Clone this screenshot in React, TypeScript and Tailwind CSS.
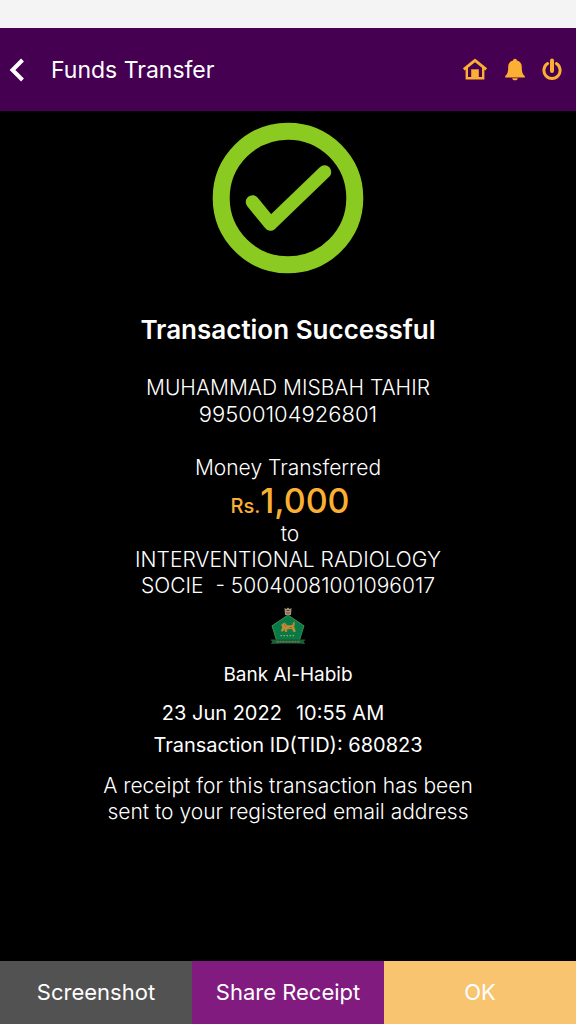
const transfer = {
  senderName: 'MUHAMMAD MISBAH TAHIR',
  senderAccount: '99500104926801',
  currency: 'Rs.',
  amount: '1,000',
  recipientName: 'INTERVENTIONAL RADIOLOGY SOCIE',
  recipientAccount: '50040081001096017',
  bank: 'Bank Al-Habib',
  date: '23 Jun 2022',
  time: '10:55 AM',
  tid: '680823',
};

const HomeIcon = () => (
  <svg viewBox="0 0 26 24" className="w-[26px] h-6" fill="none" stroke="#fbb034" aria-hidden="true">
    <path d="M1.8 11.300 13 2.300l11.200 9" strokeWidth="2.800" strokeLinejoin="round" />
    <path d="M4.800 9.500v10.700h16.400V9.500" strokeWidth="2.400" />
    <path d="M9.200 11.300h7.600V20H9.200z" fill="#fbb034" stroke="none" />
  </svg>
);

const BellIcon = () => (
  <svg viewBox="0 0 20 24" className="w-5 h-6" fill="#fbb034" aria-hidden="true">
    <path d="M10 .8c-1.100 0-1.900.8-1.900 1.800C5 3.300 3.200 5.600 3.200 9c0 4.600-.6 7-3 9v1.500h19.600V18c-2.400-2-3-4.400-3-9 0-3.400-1.800-5.700-4.900-6.400 0-1-.8-1.800-1.900-1.800z" />
    <path d="M7.200 20.200h5.600c0 1.200-1.200 2.100-2.800 2.100s-2.800-.9-2.800-2.100z" />
  </svg>
);

const PowerIcon = () => (
  <svg viewBox="0 0 20 24" className="w-5 h-6" fill="none" stroke="#fbb034" aria-hidden="true">
    <path d="M5.600 5.600a8.100 8.100 0 1 0 8.800 0" strokeWidth="3" strokeLinecap="round" />
    <path d="M10 2.600v10.400" strokeWidth="4" strokeLinecap="round" />
  </svg>
);

const SuccessMark = () => (
  <svg viewBox="0 0 152 152" className="w-[152px] h-[152px]" fill="none" stroke="#8bca20" aria-hidden="true">
    <circle cx="76" cy="76" r="66.800" strokeWidth="17" />
    <path d="M40.500 80 58.500 102 112.500 50" strokeWidth="13.500" strokeLinecap="round" strokeLinejoin="round" />
  </svg>
);

const BankEmblem = () => (
  <svg viewBox="0 0 36 38" className="w-9 h-[38px]" aria-hidden="true">
    <path d="M14.500 1l1.800 1L18 .5 19.700 2l1.800-1-.5 7h-6z" fill="#a9947c" />
    <path d="M16.500 3.500h3M16.300 6h3.400" stroke="#5c4630" strokeWidth="1" />
    <path d="M18 8 34 18.800 29.200 34H6.800L2 18.800z" fill="#087a48" stroke="#3f8c4c" strokeWidth="1" />
    <path
      d="M12 17.500c1.500-2 4-1.500 4.300.8 2 .9 4.500.6 6.200-.1 1-.7.400-2.500 1.600-3.300-.1 1.500.6 3-.4 4.300.3 1.700 1.300 2.800 1.500 5.300h-1.700l-1.300-3.200c-1.800.7-3.700.6-5.200.2l-.3 3h-1.600l-.3-3.400-2 3h-1.500l1.600-4.200c-1-.5-1.400-1.300-.9-2.400z"
      fill="#c48d34"
      stroke="#c48d34"
      strokeWidth=".8"
    />
    <path d="M14 17.400l2 2.600M19.500 20.500h2.500" stroke="#d4492a" strokeWidth="1" />
    <path d="M10.500 28.600h15" stroke="#b5a24a" strokeWidth="1.400" strokeDasharray="1.500 1.500" />
    <path d="M.5 32.800c6-.6 29-.6 35 0l-1.800 2 1.500 2.200c-6-.7-28.400-.7-34.400 0l1.500-2.200z" fill="#17613a" />
    <path d="M6.500 34.800h23" stroke="#8a8447" strokeWidth="1.200" strokeDasharray="2 1" />
  </svg>
);

const App = () => {
  return (
    <div className="min-h-screen flex flex-col bg-black text-white font-['Inter',sans-serif]">
      {/* Status bar strip */}
      <div className="h-7 bg-[#f4f4f4]" />

      <header className="h-[83px] flex items-center pl-2 pr-[14px] bg-[#450052]">
        <button type="button" aria-label="Back" className="w-[43px] h-10 flex items-center">
          <svg viewBox="0 0 18 24" className="w-[18px] h-6" fill="none" stroke="white" strokeWidth="4" aria-hidden="true">
            <path d="M14.500 2 4.500 12l10 10" />
          </svg>
        </button>
        <h1 className="flex-1 text-[23px] leading-8">Funds Transfer</h1>
        <nav className="flex items-center gap-[17px]">
          <button type="button" aria-label="Home">
            <HomeIcon />
          </button>
          <button type="button" aria-label="Notifications">
            <BellIcon />
          </button>
          <button type="button" aria-label="Log out">
            <PowerIcon />
          </button>
        </nav>
      </header>

      <main className="flex-1 flex flex-col items-center pt-[11px] text-center">
        <SuccessMark />

        <h2 className="mt-10 text-[26px] leading-8 font-semibold">Transaction Successful</h2>

        {/* Sender */}
        <div className="mt-[29px] text-[21px] leading-[26px] font-light">
          <p>{transfer.senderName}</p>
          <p className="text-[22px] leading-[26px]">{transfer.senderAccount}</p>
        </div>

        {/* Amount and recipient */}
        <div className="mt-7 w-[330px] text-[21px] leading-[26px] font-light">
          <p>Money Transferred</p>
          <p className="pl-1 text-[34px] leading-10 font-medium text-[#fbb034]">
            <span className="text-[20px] leading-none">{transfer.currency}</span>
            {transfer.amount}
          </p>
          <p className="pl-1">to</p>
          <p className="whitespace-pre-wrap">{`${transfer.recipientName}  - ${transfer.recipientAccount}`}</p>
        </div>

        {/* Bank and reference */}
        <div className="mt-2">
          <BankEmblem />
        </div>
        <p className="mt-[14px] text-[19px] leading-8">{transfer.bank}</p>
        <p className="mt-[6px] pr-[30px] flex gap-[14px] text-[20px] leading-8">
          <span>{transfer.date}</span>
          <span>{transfer.time}</span>
        </p>
        <p className="text-[20px] leading-8">Transaction ID(TID): {transfer.tid}</p>

        <p className="mt-3 mb-8 w-[400px] max-w-full text-[21px] leading-[26px] font-light">
          A receipt for this transaction has been sent to your registered email address
        </p>
      </main>

      <footer className="h-[63px] grid grid-cols-3 text-[22px]">
        <button type="button" className="bg-[#525252]">
          Screenshot
        </button>
        <button type="button" className="bg-[#811b80]">
          Share Receipt
        </button>
        <button type="button" className="bg-[#f8c46f]">
          OK
        </button>
      </footer>
    </div>
  );
};

export default App;
